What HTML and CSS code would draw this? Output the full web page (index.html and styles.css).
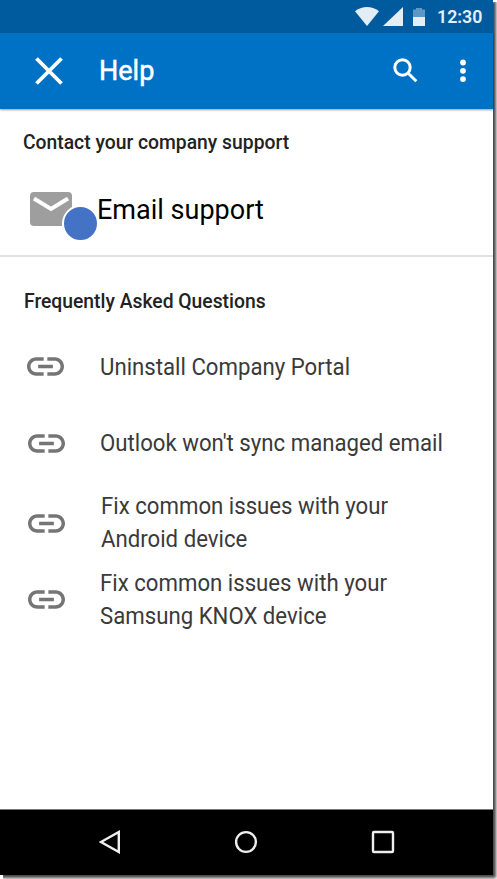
FILE: index.html
```html
<!DOCTYPE html>
<html lang="en">
<head>
<meta charset="utf-8">
<title>Help</title>
<link rel="stylesheet" href="styles.css">
</head>
<body>
<svg class="defs" width="0" height="0" aria-hidden="true">
  <symbol id="link" viewBox="2 7 20 10"><path d="M3.9 12c0-1.71 1.39-3.1 3.1-3.1h4V7H7c-2.76 0-5 2.24-5 5s2.240 5 5 5h4v-1.900H7c-1.710 0-3.100-1.390-3.100-3.100zM8 13h8v-2H8v2zm9-6h-4v1.900h4c1.710 0 3.100 1.390 3.100 3.100s-1.390 3.100-3.100 3.100h-4V17h4c2.760 0 5-2.240 5-5s-2.240-5-5-5z"/></symbol>
</svg>
<div class="phone">
  <div class="status">
    <svg class="wifi" width="24" height="19" viewBox="0 0 24 19"><path d="M0 4.200Q12-4.200 24 4.200L12 19z"/></svg>
    <svg class="signal" width="20" height="19" viewBox="0 0 20 19"><path d="M20 0v19H0z"/></svg>
    <svg class="battery" width="12" height="18" viewBox="0 0 12 18"><path class="empty" d="M3 0h6v1.500h3V9H0V1.500h3z"/><path d="M0 9h12v9H0z"/></svg>
    <span class="time">12:30</span>
  </div>
  <header class="bar">
    <svg class="close" width="28" height="28" viewBox="0 0 28 28"><path d="M1.500 1.500l25 25m0-25l-25 25"/></svg>
    <h1 class="title">Help</h1>
    <svg class="search" width="25" height="25" viewBox="0 0 25 25"><circle cx="9.500" cy="9.500" r="7.700"/><path d="M15 15l8.300 8.300"/></svg>
    <svg class="more" width="6" height="24" viewBox="0 0 6 24"><circle cx="3" cy="3.500" r="2.900"/><circle cx="3" cy="11.800" r="2.900"/><circle cx="3" cy="20.100" r="2.900"/></svg>
  </header>
  <section class="contact">
    <h2 class="heading"><span>Contact your company support</span></h2>
    <div class="email">
      <div class="mail">
        <svg width="42" height="34" viewBox="0 0 42 34"><rect width="42" height="34" rx="4"/><path d="M4 6.500l17 10.500 17-10.500"/></svg>
        <span class="badge"></span>
      </div>
      <span class="email-text">Email support</span>
    </div>
  </section>
  <section class="faq">
    <h2 class="heading"><span>Frequently Asked Questions</span></h2>
    <div class="row row-first"><svg class="link"><use href="#link"/></svg><p><span>Uninstall Company Portal</span></p></div>
    <div class="row"><svg class="link"><use href="#link"/></svg><p><span>Outlook won't sync managed email</span></p></div>
    <div class="row row-android"><svg class="link"><use href="#link"/></svg><p><span>Fix common issues with your</span><span>Android device</span></p></div>
    <div class="row"><svg class="link"><use href="#link"/></svg><p><span>Fix common issues with your</span><span>Samsung KNOX device</span></p></div>
  </section>
  <nav class="nav">
    <svg width="22" height="24" viewBox="0 0 22 24"><path d="M2 12L19.800 2v20z"/></svg>
    <svg width="24" height="24" viewBox="0 0 24 24"><circle cx="12" cy="12" r="9.900"/></svg>
    <svg width="24" height="24" viewBox="0 0 24 24"><rect x="2" y="2" width="20" height="20" rx="1"/></svg>
  </nav>
</div>
</body>
</html>
```

FILE: styles.css
```css
* { box-sizing: border-box; margin: 0; padding: 0; }
body { width: 497px; height: 879px; overflow: hidden; background: #fff; font-family: Roboto, "Liberation Sans", sans-serif; }
.defs { display: block; position: absolute; }
svg { display: block; flex: none; }
.phone { width: 493px; height: 875px; display: flex; flex-direction: column; background: #fff; box-shadow: 2px 2px 3px 1px #444; clip-path: polygon(0 0, 493px 0, 493px 2px, 497px 2px, 497px 879px, 3px 879px, 3px 875px, 0 875px); }
.status { height: 33px; background: #005a9e; display: flex; justify-content: flex-end; padding: 7px 11px 0 0; fill: #e3edf6; }
.signal { margin-left: 4px; }
.battery { margin: 1px 0 0 10px; }
.empty { fill: #5d97c4; }
.time { margin-left: 12px; width: 45px; font-size: 18px; line-height: 20px; font-weight: 600; color: #e8f0f7; white-space: nowrap; transform: scaleX(.985); transform-origin: 0 50%; }
.bar { height: 76px; background: #0072c6; display: flex; align-items: center; padding: 0 27px 0 35px; box-shadow: 0 1px 2px #0006; }
.close { stroke: #fff; stroke-width: 3.800; }
.title { margin: 0 0 0 36px; font-size: 28px; line-height: 32px; font-weight: 400; color: #fff; -webkit-text-stroke: .5px #fff; transform: scaleX(.965); transform-origin: 0 50%; }
.search { margin: -1px 0 0 auto; fill: none; stroke: #fff; stroke-width: 3; }
.more { margin-left: 42px; fill: #fff; }
.contact { height: 148px; border-bottom: 2px solid #e2e2e2; padding-top: 21px; }
.heading { font-size: 20px; line-height: 24px; font-weight: 500; color: #222; padding-left: 23px; white-space: nowrap; }
.heading span, .row span, .email-text { display: block; width: max-content; transform: scaleX(.965); transform-origin: 0 50%; }
.email { display: flex; align-items: flex-start; padding: 38px 0 0 30px; }
.mail { position: relative; }
.mail svg { fill: #9e9e9e; }
.mail path { fill: none; stroke: #fff; stroke-width: 4; }
.badge { position: absolute; left: 32px; top: 13px; width: 37px; height: 37px; border: 2.500px solid #fff; border-radius: 50%; background: #4472c4; }
.email-text { margin: 1px 0 0 25px; font-size: 28px; line-height: 34px; color: #000; }
.faq { flex: 1; padding-top: 32px; }
.faq .heading { padding-left: 24px; }
.row { height: 77px; display: flex; align-items: center; padding-left: 28px; color: #3a3a3a; font-size: 23px; line-height: 33px; white-space: nowrap; }
.row-first { margin-top: 15px; padding-left: 27px; }
.row .link { width: 37px; height: 19px; fill: #757575; }
.row p { margin-left: 35px; }
.row-first p { margin: 1px 0 0 36px; }
.row-android { padding-top: 3px; height: 79px; }
.row-android p { margin-left: 36px; }
.row-android + .row { height: 77px; }
.nav { height: 66px; background: #000; border-top: 1px solid #777; display: flex; align-items: center; padding: 0 0 2px 99px; gap: 113px; }
.nav svg { fill: none; stroke: #eee; stroke-width: 2.400; }
```
